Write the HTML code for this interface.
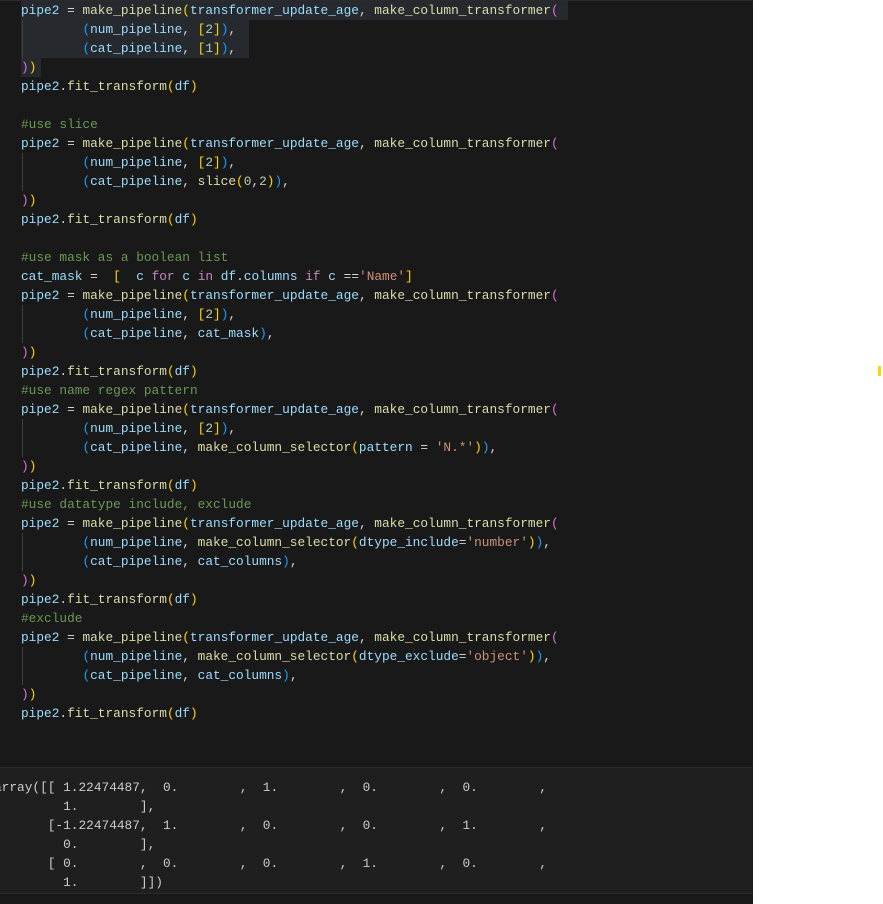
<!DOCTYPE html>
<html><head><meta charset="utf-8"><style>
html,body{margin:0;padding:0;background:#fff;width:883px;height:904px;overflow:hidden}
#dark{position:absolute;left:0;top:0;width:753px;height:904px;background:#191919;overflow:hidden}
pre{margin:0;font-family:"Liberation Mono",monospace;font-size:12.8px;line-height:19px;color:#d4d4d4;white-space:pre;position:absolute}
#code{left:21px;top:0.5px}
#out{position:absolute;left:0;top:767px;width:753px;height:125px;background:#1f1f1f;border-top:1px solid #2b2b2b;border-bottom:1px solid #2b2b2b}
#outp{left:-6px;top:10px;color:#cccccc}
.v{color:#9cdcfe}.f{color:#dcdcaa}.c{color:#6a9955}.s{color:#ce9178}.n{color:#b5cea8}.k{color:#c586c0}
.g{color:#ffd700}.p{color:#da70d6}.b{color:#179fff}
.sel{position:absolute;background:#262a2e}
.guide{position:absolute;left:22px;width:1px;background:#404040}
</style></head><body>
<div id="dark">
<div style="position:absolute;left:0;top:0;width:753px;height:1px;background:#2b2b2b"></div>
<div class="sel" style="left:21px;top:1px;width:547px;height:19px"></div>
<div class="sel" style="left:21px;top:20px;width:228px;height:38px"></div>
<div class="sel" style="left:21px;top:58px;width:20px;height:19px"></div>
<div class="guide" style="top:20px;height:38px"></div>
<div class="guide" style="top:153px;height:38px"></div>
<div class="guide" style="top:305px;height:38px"></div>
<div class="guide" style="top:419px;height:38px"></div>
<div class="guide" style="top:533px;height:38px"></div>
<div class="guide" style="top:647px;height:38px"></div>
<pre id="code"><span class="v">pipe2</span> = <span class="f">make_pipeline</span><span class="g">(</span><span class="v">transformer_update_age</span>, <span class="f">make_column_transformer</span><span class="p">(</span>
        <span class="b">(</span><span class="v">num_pipeline</span>, <span class="g">[</span><span class="n">2</span><span class="g">]</span><span class="b">)</span>,
        <span class="b">(</span><span class="v">cat_pipeline</span>, <span class="g">[</span><span class="n">1</span><span class="g">]</span><span class="b">)</span>,
<span class="p">)</span><span class="g">)</span>
<span class="v">pipe2</span>.<span class="f">fit_transform</span><span class="g">(</span><span class="v">df</span><span class="g">)</span>

<span class="c">#use slice</span>
<span class="v">pipe2</span> = <span class="f">make_pipeline</span><span class="g">(</span><span class="v">transformer_update_age</span>, <span class="f">make_column_transformer</span><span class="p">(</span>
        <span class="b">(</span><span class="v">num_pipeline</span>, <span class="g">[</span><span class="n">2</span><span class="g">]</span><span class="b">)</span>,
        <span class="b">(</span><span class="v">cat_pipeline</span>, <span class="f">slice</span><span class="g">(</span><span class="n">0</span>,<span class="n">2</span><span class="g">)</span><span class="b">)</span>,
<span class="p">)</span><span class="g">)</span>
<span class="v">pipe2</span>.<span class="f">fit_transform</span><span class="g">(</span><span class="v">df</span><span class="g">)</span>

<span class="c">#use mask as a boolean list</span>
<span class="v">cat_mask</span> =  <span class="g">[</span>  <span class="v">c</span> <span class="k">for</span> <span class="v">c</span> <span class="k">in</span> <span class="v">df</span>.<span class="v">columns</span> <span class="k">if</span> <span class="v">c</span> ==<span class="s">'Name'</span><span class="g">]</span>
<span class="v">pipe2</span> = <span class="f">make_pipeline</span><span class="g">(</span><span class="v">transformer_update_age</span>, <span class="f">make_column_transformer</span><span class="p">(</span>
        <span class="b">(</span><span class="v">num_pipeline</span>, <span class="g">[</span><span class="n">2</span><span class="g">]</span><span class="b">)</span>,
        <span class="b">(</span><span class="v">cat_pipeline</span>, <span class="v">cat_mask</span><span class="b">)</span>,
<span class="p">)</span><span class="g">)</span>
<span class="v">pipe2</span>.<span class="f">fit_transform</span><span class="g">(</span><span class="v">df</span><span class="g">)</span>
<span class="c">#use name regex pattern</span>
<span class="v">pipe2</span> = <span class="f">make_pipeline</span><span class="g">(</span><span class="v">transformer_update_age</span>, <span class="f">make_column_transformer</span><span class="p">(</span>
        <span class="b">(</span><span class="v">num_pipeline</span>, <span class="g">[</span><span class="n">2</span><span class="g">]</span><span class="b">)</span>,
        <span class="b">(</span><span class="v">cat_pipeline</span>, <span class="f">make_column_selector</span><span class="g">(</span><span class="v">pattern</span> = <span class="s">'N.*'</span><span class="g">)</span><span class="b">)</span>,
<span class="p">)</span><span class="g">)</span>
<span class="v">pipe2</span>.<span class="f">fit_transform</span><span class="g">(</span><span class="v">df</span><span class="g">)</span>
<span class="c">#use datatype include, exclude</span>
<span class="v">pipe2</span> = <span class="f">make_pipeline</span><span class="g">(</span><span class="v">transformer_update_age</span>, <span class="f">make_column_transformer</span><span class="p">(</span>
        <span class="b">(</span><span class="v">num_pipeline</span>, <span class="f">make_column_selector</span><span class="g">(</span><span class="v">dtype_include</span>=<span class="s">'number'</span><span class="g">)</span><span class="b">)</span>,
        <span class="b">(</span><span class="v">cat_pipeline</span>, <span class="v">cat_columns</span><span class="b">)</span>,
<span class="p">)</span><span class="g">)</span>
<span class="v">pipe2</span>.<span class="f">fit_transform</span><span class="g">(</span><span class="v">df</span><span class="g">)</span>
<span class="c">#exclude</span>
<span class="v">pipe2</span> = <span class="f">make_pipeline</span><span class="g">(</span><span class="v">transformer_update_age</span>, <span class="f">make_column_transformer</span><span class="p">(</span>
        <span class="b">(</span><span class="v">num_pipeline</span>, <span class="f">make_column_selector</span><span class="g">(</span><span class="v">dtype_exclude</span>=<span class="s">'object'</span><span class="g">)</span><span class="b">)</span>,
        <span class="b">(</span><span class="v">cat_pipeline</span>, <span class="v">cat_columns</span><span class="b">)</span>,
<span class="p">)</span><span class="g">)</span>
<span class="v">pipe2</span>.<span class="f">fit_transform</span><span class="g">(</span><span class="v">df</span><span class="g">)</span></pre>
<div id="out"><pre id="outp">array([[ 1.22474487,  0.        ,  1.        ,  0.        ,  0.        ,
         1.        ],
       [-1.22474487,  1.        ,  0.        ,  0.        ,  1.        ,
         0.        ],
       [ 0.        ,  0.        ,  0.        ,  1.        ,  0.        ,
         1.        ]])</pre></div>
</div>
<div style="position:absolute;left:878px;top:366px;width:3px;height:10px;background:#ffd700"></div>
</body></html>
